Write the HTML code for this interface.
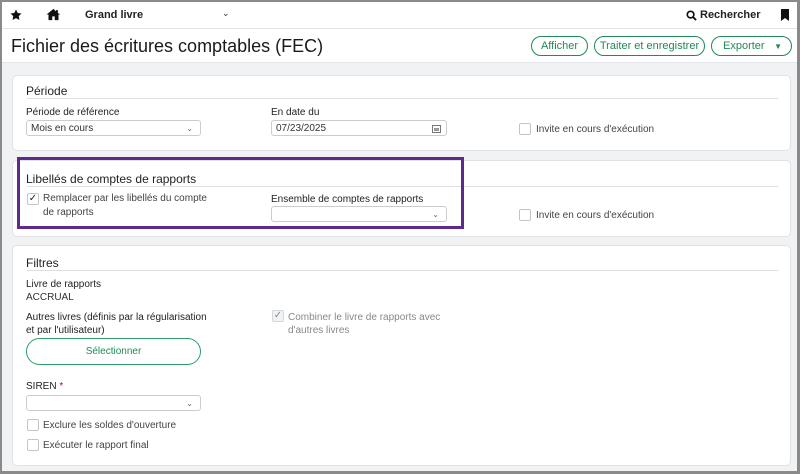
<!DOCTYPE html>
<html><head><meta charset="utf-8"><style>
*{box-sizing:border-box;margin:0;padding:0}
body{width:800px;height:474px;overflow:hidden;background:#8a8a8a;font-family:"Liberation Sans",sans-serif;color:#222;position:relative}
.page{position:absolute;left:2px;top:2px;width:795px;height:469px;background:#f0f2f4;overflow:hidden}
.a{position:absolute;white-space:nowrap}
.top{position:absolute;left:0;top:0;width:795px;height:27px;background:#fff;border-bottom:1px solid #e3e6e8}
.hdr{position:absolute;left:0;top:27px;width:795px;height:34px;background:#fff;border-bottom:1px solid #e3e6e8}
.card{position:absolute;left:10px;width:779px;background:#fff;border:1px solid #e0e3e6;border-radius:5px}
.hl{position:absolute;left:14px;width:751px;height:1px;background:#dde1e4}
.t{font-size:12px;color:#222}
.lbl{font-size:10px;color:#222}
.sm{font-size:10px;color:#444}
.inp{position:absolute;height:16px;border:1px solid #c9cdd1;border-radius:3px;background:#fff;font-size:10px;padding:0 4px;line-height:15px;color:#333}
.chev{position:absolute;right:7px;top:0;font-size:8px;color:#666}
.cb{position:absolute;width:12px;height:12px;border:1px solid #c2c6ca;border-radius:2px;background:#fff}
.btn{position:absolute;height:20px;border:1.5px solid #1f8a56;border-radius:10px;color:#1f8a56;font-size:11px;display:flex;align-items:center;justify-content:center;background:#fff}
</style></head><body><div class="page">
<div class="top">
<svg class="a" style="left:8px;top:7px" width="12" height="12" viewBox="0 0 24 24"><path d="M12 1l3.4 7 7.6 1-5.5 5.3 1.3 7.7L12 18.3 5.2 22l1.3-7.7L1 9l7.6-1z" fill="#111"/></svg>
<svg class="a" style="left:44px;top:6px" width="15" height="13" viewBox="0 0 24 20"><path d="M12 1L1 10h3v9h6v-6h4v6h6v-9h3L19 7.5V3h-3v2L12 1z" fill="#111"/></svg>
<div class="a" style="left:83px;top:7px;font-size:11px;font-weight:bold">Grand livre</div>
<div class="a" style="left:220px;top:6px;font-size:9px;color:#333">&#8964;</div>
<svg class="a" style="left:684px;top:8px" width="11" height="11" viewBox="0 0 12 12"><circle cx="5" cy="5" r="3.6" stroke="#111" stroke-width="1.8" fill="none"/><path d="M7.6 7.6l3.4 3.4" stroke="#111" stroke-width="2"/></svg>
<div class="a" style="left:698px;top:7px;font-size:11px;font-weight:bold">Rechercher</div>
<svg class="a" style="left:779px;top:7px" width="8" height="12" viewBox="0 0 8 12"><path d="M0 0h8v12L4 9 0 12z" fill="#111"/></svg>
</div>
<div class="hdr">
<div class="a" style="left:9px;top:7px;font-size:18px;color:#1a1a1a">Fichier des écritures comptables (FEC)</div>
<div class="btn" style="left:529px;top:7px;width:57px">Afficher</div>
<div class="btn" style="left:592px;top:7px;width:111px">Traiter et enregistrer</div>
<div class="btn" style="left:709px;top:7px;width:81px;justify-content:flex-start;padding-left:11px">Exporter<span style="position:absolute;right:9px;top:5px;font-size:8px">&#9660;</span></div>
</div>

<div class="card" style="top:73px;height:76px">
<div class="a t" style="left:13px;top:8px">Période</div>
<div class="hl" style="top:22px"></div>
<div class="a lbl" style="left:13px;top:31px">Période de référence</div>
<div class="inp" style="left:13px;top:44px;width:175px">Mois en cours<span class="chev">&#8964;</span></div>
<div class="a lbl" style="left:258px;top:31px">En date du</div>
<div class="inp" style="left:258px;top:44px;width:176px">07/23/2025<svg style="position:absolute;right:5px;top:3px" width="9" height="9" viewBox="0 0 9 9"><rect x=".5" y="1.5" width="8" height="7" fill="none" stroke="#777"/><rect x="2" y="4" width="5" height="3" fill="#999"/></svg></div>
<div class="cb" style="left:506px;top:47px"></div>
<div class="a sm" style="left:523px;top:48px">Invite en cours d'exécution</div>
</div>

<div class="card" style="top:158px;height:77px">
<div class="a t" style="left:13px;top:11px">Libellés de comptes de rapports</div>
<div class="hl" style="top:25px"></div>
<div class="cb" style="left:14px;top:32px;font-size:10px;line-height:10px;text-align:center;color:#222">&#10003;</div>
<div class="a sm" style="left:30px;top:31px;line-height:14px">Remplacer par les libellés du compte<br>de rapports</div>
<div class="a lbl" style="left:258px;top:33px">Ensemble de comptes de rapports</div>
<div class="inp" style="left:258px;top:45px;width:176px"><span class="chev">&#8964;</span></div>
<div class="cb" style="left:506px;top:48px"></div>
<div class="a sm" style="left:523px;top:49px">Invite en cours d'exécution</div>
</div>
<div class="a" style="left:15px;top:155px;width:447px;height:72px;border:3px solid #5f2a8c"></div>

<div class="card" style="top:243px;height:221px">
<div class="a t" style="left:13px;top:10px">Filtres</div>
<div class="hl" style="top:24px"></div>
<div class="a lbl" style="left:13px;top:33px">Livre de rapports</div>
<div class="a lbl" style="left:13px;top:46px;color:#333">ACCRUAL</div>
<div class="a lbl" style="left:13px;top:65px;line-height:13px">Autres livres (définis par la régularisation<br>et par l'utilisateur)</div>
<div class="a" style="left:13px;top:92px;width:175px;height:27px;border:1px solid #2e9a66;border-radius:14px;color:#1f8a56;font-size:10px;text-align:center;line-height:25px">Sélectionner</div>
<div class="cb" style="left:259px;top:64px;background:#f1f2f3;border-color:#d5d8db;font-size:10px;line-height:10px;text-align:center;color:#888">&#10003;</div>
<div class="a sm" style="left:275px;top:65px;line-height:13px;color:#888">Combiner le livre de rapports avec<br>d'autres livres</div>
<div class="a lbl" style="left:13px;top:135px">SIREN <span style="color:#d0021b">*</span></div>
<div class="inp" style="left:13px;top:149px;width:175px"><span class="chev">&#8964;</span></div>
<div class="cb" style="left:14px;top:173px"></div>
<div class="a sm" style="left:30px;top:174px">Exclure les soldes d'ouverture</div>
<div class="cb" style="left:14px;top:193px"></div>
<div class="a sm" style="left:30px;top:194px">Exécuter le rapport final</div>
</div>
</div></body></html>
